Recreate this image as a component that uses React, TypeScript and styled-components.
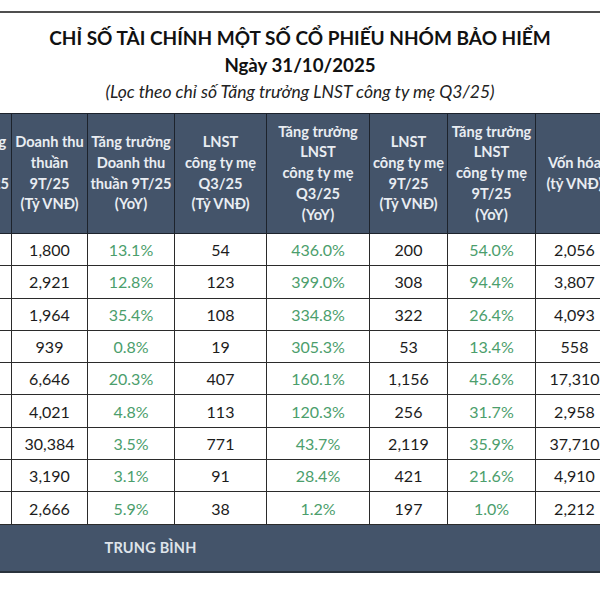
import React from 'react'
import styled, { createGlobalStyle } from 'styled-components'

const GlobalStyle = createGlobalStyle`
  html, body {
    margin: 0;
    padding: 0;
    background: #ffffff;
  }
  body {
    font-family: Lato, 'Noto Sans', sans-serif;
    color: #1c1c1c;
  }
`

const Page = styled.div`
  width: 600px;
  height: 600px;
  overflow: hidden;
  box-sizing: border-box;
  background: #fff;
`

// dark rule across the top of the sheet
const Heading = styled.div`
  display: flex;
  flex-direction: column;
  align-items: center;
  margin-top: 11px;
  border-top: 2px solid #4f4f4f;
  padding-top: 12px;
  height: 102px;
  box-sizing: border-box;
`

const Title = styled.div`
  font-size: 19px;
  font-weight: 700;
  line-height: 26px;
  color: #111;
  white-space: nowrap;
`

const DateLine = styled(Title)`
  font-size: 18.7px;
  line-height: 28px;
`

const Note = styled.div`
  font-size: 17.5px;
  font-style: italic;
  line-height: 26px;
  color: #222;
  white-space: nowrap;
`

const Table = styled.table`
  border-collapse: collapse;
  table-layout: fixed;
  margin-left: -79px;
  width: 692px;
`

const HeadCell = styled.th<{ $w: number }>`
  width: ${(p) => p.$w}px;
  height: 120px;
  padding: 0 2px;
  background: #44546a;
  color: #e9edf2;
  font-size: 14.6px;
  font-weight: 700;
  line-height: 20.8px;
  text-align: center;
  vertical-align: middle;
  white-space: nowrap;
  border: 1px solid #1d232c;
  box-sizing: border-box;
`

const Cell = styled.td<{ $green?: boolean }>`
  height: 32.3px;
  padding: 0 4px;
  font-size: 16px;
  text-align: center;
  vertical-align: middle;
  white-space: nowrap;
  color: ${(p) => (p.$green ? '#4b9e6c' : '#1c1c1c')};
  border: 1px solid #2b2b2b;
  box-sizing: border-box;
`

const FootCell = styled.td`
  height: 44px;
  background: #44546a;
  color: #dfe4ea;
  font-size: 14.5px;
  font-weight: 700;
  padding-left: 183px;
  text-align: left;
  letter-spacing: 0.2px;
  border-top: 1px solid #2b2b2b;
  border-bottom: 2px solid #2a323d;
`

const columns = [
  { w: 90, lines: ['Tăng trưởng', 'DT', 'thuần Q3/25', '(YoY)'] },
  { w: 76, lines: ['Doanh thu', 'thuần', '9T/25', '(Tỷ VNĐ)'] },
  { w: 87, lines: ['Tăng trưởng', 'Doanh thu', 'thuần 9T/25', '(YoY)'] },
  { w: 92, lines: ['LNST', 'công ty mẹ', 'Q3/25', '(Tỷ VNĐ)'] },
  { w: 103, lines: ['Tăng trưởng', 'LNST', 'công ty mẹ', 'Q3/25', '(YoY)'] },
  { w: 78, lines: ['LNST', 'công ty mẹ', '9T/25', '(Tỷ VNĐ)'] },
  { w: 88, lines: ['Tăng trưởng', 'LNST', 'công ty mẹ', '9T/25', '(YoY)'] },
  { w: 78, lines: ['Vốn hóa', '(tỷ VNĐ)'] },
]

const rows = [
  ['1,800', '13.1%', '54', '436.0%', '200', '54.0%', '2,056'],
  ['2,921', '12.8%', '123', '399.0%', '308', '94.4%', '3,807'],
  ['1,964', '35.4%', '108', '334.8%', '322', '26.4%', '4,093'],
  ['939', '0.8%', '19', '305.3%', '53', '13.4%', '558'],
  ['6,646', '20.3%', '407', '160.1%', '1,156', '45.6%', '17,310'],
  ['4,021', '4.8%', '113', '120.3%', '256', '31.7%', '2,958'],
  ['30,384', '3.5%', '771', '43.7%', '2,119', '35.9%', '37,710'],
  ['3,190', '3.1%', '91', '28.4%', '421', '21.6%', '4,910'],
  ['2,666', '5.9%', '38', '1.2%', '197', '1.0%', '2,212'],
]

export default function App() {
  return (
    <Page>
      <GlobalStyle />
      <Heading>
        <Title>CHỈ SỐ TÀI CHÍNH MỘT SỐ CỔ PHIẾU NHÓM BẢO HIỂM</Title>
        <DateLine>Ngày 31/10/2025</DateLine>
        <Note>(Lọc theo chỉ số Tăng trưởng LNST công ty mẹ Q3/25)</Note>
      </Heading>
      <Table>
        <thead>
          <tr>
            {columns.map((c, i) => (
              <HeadCell key={i} $w={c.w}>
                {c.lines.map((l, j) => (
                  <React.Fragment key={j}>
                    {j > 0 && <br />}
                    {l}
                  </React.Fragment>
                ))}
              </HeadCell>
            ))}
          </tr>
        </thead>
        <tbody>
          {rows.map((r, i) => (
            <tr key={i}>
              <Cell />
              {r.map((v, j) => (
                <Cell key={j} $green={v.endsWith('%')}>
                  {v}
                </Cell>
              ))}
            </tr>
          ))}
          <tr>
            <FootCell colSpan={8}>TRUNG BÌNH</FootCell>
          </tr>
        </tbody>
      </Table>
    </Page>
  )
}
